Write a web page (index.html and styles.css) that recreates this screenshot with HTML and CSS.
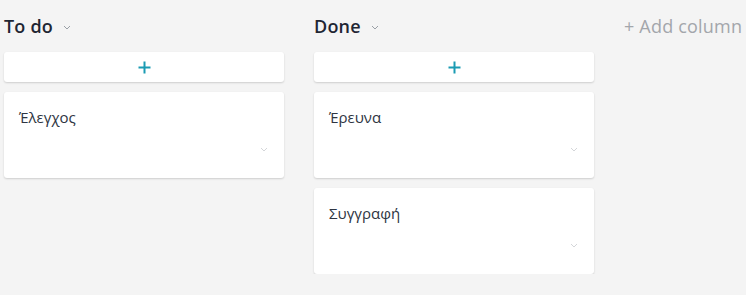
FILE: index.html
```html
<!DOCTYPE html>
<html>
<head>
<meta charset="utf-8">
<link rel="stylesheet" href="styles.css">
</head>
<body>
<div class="board">
  <div class="column">
    <div class="col-head">
      <span class="col-title">To do</span>
      <svg class="chev" width="8" height="5" viewBox="0 0 8 5"><path d="M1 1l3 3 3-3" fill="none" stroke="#9aa0a6" stroke-width="1"/></svg>
    </div>
    <div class="add-card">
      <svg width="13" height="13" viewBox="0 0 13 13"><path d="M6.5 0.5v12M0.5 6.5h12" stroke="#1a9bb3" stroke-width="2"/></svg>
    </div>
    <div class="card">
      <div class="card-title">Έλεγχος</div>
      <svg class="card-chev" width="8" height="5" viewBox="0 0 8 5"><path d="M1 1l3 3 3-3" fill="none" stroke="#d4d6d9" stroke-width="1"/></svg>
    </div>
  </div>
  <div class="column">
    <div class="col-head">
      <span class="col-title">Done</span>
      <svg class="chev" width="8" height="5" viewBox="0 0 8 5"><path d="M1 1l3 3 3-3" fill="none" stroke="#9aa0a6" stroke-width="1"/></svg>
    </div>
    <div class="add-card">
      <svg width="13" height="13" viewBox="0 0 13 13"><path d="M6.5 0.5v12M0.5 6.5h12" stroke="#1a9bb3" stroke-width="2"/></svg>
    </div>
    <div class="card">
      <div class="card-title">Έρευνα</div>
      <svg class="card-chev" width="8" height="5" viewBox="0 0 8 5"><path d="M1 1l3 3 3-3" fill="none" stroke="#d4d6d9" stroke-width="1"/></svg>
    </div>
    <div class="card">
      <div class="card-title">Συγγραφή</div>
      <svg class="card-chev" width="8" height="5" viewBox="0 0 8 5"><path d="M1 1l3 3 3-3" fill="none" stroke="#d4d6d9" stroke-width="1"/></svg>
    </div>
  </div>
  <div class="add-column">+ Add column</div>
</div>
</body>
</html>
```
FILE: styles.css
```css
html, body {
  margin: 0;
  padding: 0;
  background: #f4f4f4;
  font-family: "Open Sans", "Lato", sans-serif;
  overflow: hidden;
}
.board {
  display: flex;
  gap: 30px;
  padding: 14px 0 0 4px;
  align-items: flex-start;
}
.column {
  width: 280px;
  display: flex;
  flex-direction: column;
  gap: 10px;
}
.col-head {
  display: flex;
  align-items: center;
  height: 24px;
  margin-bottom: 4px;
}
.col-title {
  font-size: 18px;
  font-weight: 600;
  color: #1f2633;
  letter-spacing: 0.2px;
}
.chev {
  margin-left: 10px;
  margin-top: 3px;
}
.add-card {
  height: 30px;
  background: #fff;
  border-radius: 3px;
  box-shadow: 0 1px 2px rgba(0,0,0,0.16);
  display: flex;
  align-items: center;
  justify-content: center;
}
.card {
  height: 86px;
  background: #fff;
  border-radius: 3px;
  box-shadow: 0 1px 2px rgba(0,0,0,0.16);
  box-sizing: border-box;
  padding: 15px 15px 0 15px;
  display: flex;
  flex-direction: column;
}
.card-title {
  font-size: 15px;
  color: #2e3542;
  line-height: 20px;
}
.card-chev {
  align-self: flex-end;
  margin-top: 20px;
  margin-right: 1px;
}
.add-column {
  font-size: 18px;
  color: #a3a6ab;
  line-height: 24px;
  white-space: nowrap;
  letter-spacing: 0.2px;
}
```
